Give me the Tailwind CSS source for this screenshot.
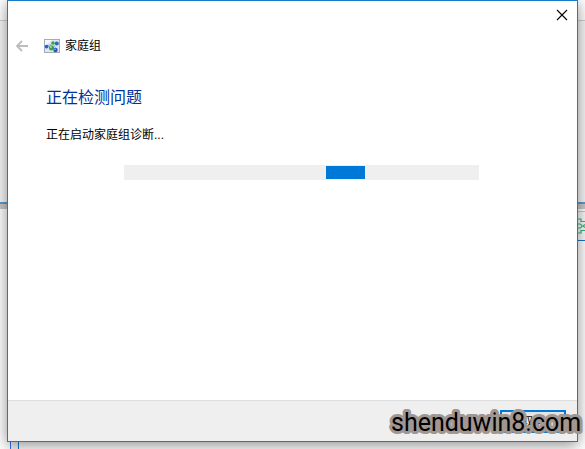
<!DOCTYPE html>
<html lang="zh-CN">
<head>
    <meta charset="UTF-8">
    <meta name="viewport" content="width=device-width, initial-scale=1.0">
    <title>家庭组</title>
    <script src="https://cdn.jsdelivr.net/npm/@tailwindcss/browser@4"></script>
</head>
<body class="relative flex min-h-screen flex-col overflow-hidden bg-white px-[7px] pb-[7px] font-['Liberation_Sans','Noto_Sans_CJK_SC',sans-serif] text-xs text-black">

    <!--Windows behind the dialog-->
    <div class="absolute inset-0 flex flex-col" aria-hidden="true">
        <div class="h-[21px] border-b border-[#d0d0d0] bg-white"></div>
        <div class="h-[181px] bg-[#f7f7f7]"></div>
        <div class="h-0.5 bg-[#5b9bd0]"></div>
        <div class="h-[5px] bg-[#c8c8c8]"></div>
        <div class="flex flex-1 justify-between">
            <div class="flex flex-col">
                <div class="flex-1"></div>
                <div class="flex h-10">
                    <div class="ml-2.5 w-2 border-l border-[#2f6fee] bg-[#f4f4f4]"></div>
                    <div class="w-px bg-[#1a7fd0]"></div>
                </div>
            </div>
            <div class="mt-0.5 h-[30px] w-2 border-t border-b border-t-[#c8c8c8] border-b-[#1479d4] bg-[#fafafa]">
                <svg class="mt-1.5 h-4 w-2" viewBox="0 0 8 16" fill="none" stroke="#35b97c" stroke-width="1.2">
                    <path d="M1 1H4V3.5H8M1 6H3Q5 7 5 8Q5 9 3 10H1M8 6.5L6 8L8 9.5M8 12.5H4V15H1" />
                </svg>
            </div>
        </div>
    </div>

    <!--Troubleshooter dialog-->
    <main class="relative flex flex-1 flex-col border border-[#1a7bcb] bg-white shadow-[0_3px_14px_rgba(0,0,0,0.45)]">
        <button type="button" aria-label="关闭" class="absolute top-1.5 right-[7px] p-0.5">
            <svg class="size-3" viewBox="0 0 12 12" fill="none" stroke="#000" stroke-width="1.1">
                <path d="M1 1L11 11M11 1L1 11" />
            </svg>
        </button>

        <header class="mt-9 flex h-[18px] items-center pl-2">
            <button type="button" aria-label="返回" disabled>
                <svg class="h-3 w-3" viewBox="0 0 12 12" fill="none" stroke="#bcbcbc" stroke-width="1.8">
                    <path d="M6 1L1 6L6 11M1 6H12" />
                </svg>
            </button>
            <svg class="ml-4 h-3.5 w-4" viewBox="0 0 16 14">
                <rect x="0.5" y="0.5" width="15" height="13" fill="#dfe6ee" stroke="#a3adb8" />
                <path d="M1 1H8L2 6H1Z" fill="#f6f9fc" />
                <path d="M3 7.5L9 4L12 10" fill="none" stroke="#9dbbdb" />
                <circle cx="2.6" cy="7.6" r="1.9" fill="#2f5fc4" />
                <circle cx="9" cy="4" r="1.8" fill="#39a845" />
                <circle cx="7.5" cy="8.8" r="2.6" fill="#3aa548" />
                <circle cx="11.5" cy="11" r="2.2" fill="#2456b8" />
                <circle cx="12.8" cy="4.6" r="2" fill="#2e66c6" />
                <circle cx="6.9" cy="7.9" r="1" fill="#a5e398" />
                <circle cx="11" cy="10.2" r="0.8" fill="#8fc0f5" />
            </svg>
            <span class="ml-[5px]">家庭组</span>
        </header>

        <section class="flex-1 px-[38px] pt-[31px]">
            <h1 class="text-base leading-6 text-[#003399]">正在检测问题</h1>
            <p id="status" class="mt-[17px] leading-4">正在启动家庭组诊断...</p>
            <div role="progressbar" aria-labelledby="status" class="mt-[22px] mr-[60px] ml-[78px] h-[15px] bg-[#efefef] py-px">
                <div class="h-full w-[11%] bg-[#0078d7]" style="margin-left: 57%"></div>
            </div>
        </section>

        <footer class="flex h-[41px] justify-end border-t border-[#dfdfdf] bg-[#efefef] pt-[9px] pr-[11px]">
            <button type="button" class="h-[23px] w-[66px] border-2 border-[#0078d7] bg-[#e5e5e5] leading-4">取消</button>
        </footer>
    </main>

    <!--Site watermark-->
    <svg class="absolute right-0 bottom-1.5 h-10 w-[200px]" viewBox="0 0 200 40" aria-label="shenduwin8.com">
        <text x="6" y="28" class="fill-black stroke-[#a09692] stroke-[6px] font-['Roboto',sans-serif] text-[25px] [paint-order:stroke] [stroke-linejoin:round]">shenduwin8.com</text>
    </svg>

</body>
</html>
